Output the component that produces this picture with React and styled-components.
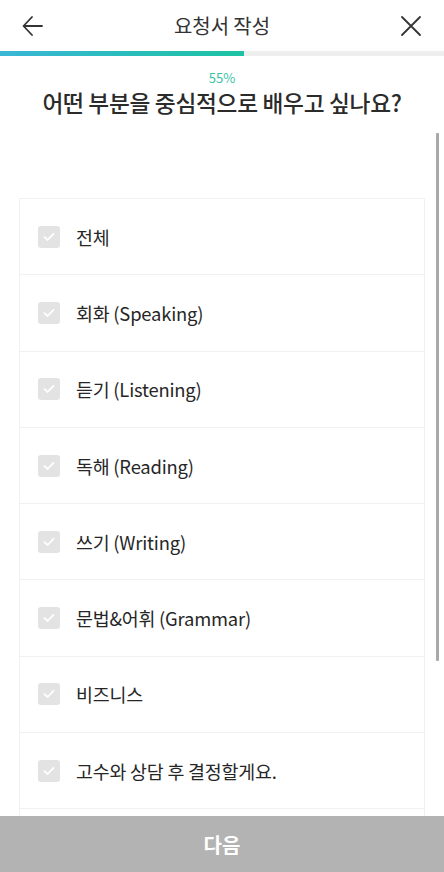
import React from "react";
import styled, { createGlobalStyle } from "styled-components";

const GlobalStyle = createGlobalStyle`
  html, body {
    margin: 0;
    padding: 0;
    background: #fff;
  }
  * {
    box-sizing: border-box;
  }
`;

const OPTIONS = [
  "전체",
  "회화 (Speaking)",
  "듣기 (Listening)",
  "독해 (Reading)",
  "쓰기 (Writing)",
  "문법&어휘 (Grammar)",
  "비즈니스",
  "고수와 상담 후 결정할게요.",
];

const App = () => {
  const progress = 55;

  return (
    <StPage>
      <GlobalStyle />
      <StHeader>
        <StIconButton aria-label="뒤로">
          <svg width="22" height="22" viewBox="0 0 22 22" fill="none">
            <path
              d="M20 11H2M10 2L1.5 11L10 20"
              stroke="#333"
              strokeWidth="1.8"
              strokeLinecap="round"
              strokeLinejoin="round"
            />
          </svg>
        </StIconButton>
        <StTitle>요청서 작성</StTitle>
        <StIconButton aria-label="닫기">
          <svg width="22" height="22" viewBox="0 0 22 22" fill="none">
            <path
              d="M2 2L20 20M20 2L2 20"
              stroke="#333"
              strokeWidth="1.8"
              strokeLinecap="round"
            />
          </svg>
        </StIconButton>
      </StHeader>

      <StProgressTrack>
        <StProgressFill style={{ width: `${progress}%` }} />
      </StProgressTrack>

      <StPercent>{progress}%</StPercent>
      <StQuestion>어떤 부분을 중심적으로 배우고 싶나요?</StQuestion>

      <StBody>
        <StScroll>
          <StCard>
            {OPTIONS.map((label) => (
              <StRow key={label}>
                <StCheck>
                  <svg width="12" height="10" viewBox="0 0 12 10" fill="none">
                    <path
                      d="M1.5 5.2L4.6 8L10.5 1.8"
                      stroke="#fff"
                      strokeWidth="1.8"
                      strokeLinecap="round"
                      strokeLinejoin="round"
                    />
                  </svg>
                </StCheck>
                <StLabel>{label}</StLabel>
              </StRow>
            ))}
            <StRow />
          </StCard>
        </StScroll>
        <StThumb />
      </StBody>

      <StNextButton>다음</StNextButton>
    </StPage>
  );
};

export default App;

const StPage = styled.div`
  width: 444px;
  height: 872px;
  display: flex;
  flex-direction: column;
  overflow: hidden;
  font-family: "Noto Sans CJK KR", "Noto Sans", sans-serif;
  color: #333;
`;

const StHeader = styled.header`
  height: 51px;
  display: flex;
  align-items: center;
  justify-content: space-between;
  padding: 0 22px 0 22px;
  flex-shrink: 0;
`;

const StIconButton = styled.button`
  width: 22px;
  height: 22px;
  padding: 0;
  border: 0;
  background: none;
  display: flex;
  align-items: center;
  justify-content: center;
`;

const StTitle = styled.h1`
  margin: 0;
  font-size: 20px;
  font-weight: 400;
  color: #333;
  letter-spacing: -0.1px;
`;

const StProgressTrack = styled.div`
  height: 5px;
  background: #eeeeee;
  flex-shrink: 0;
`;

const StProgressFill = styled.div`
  height: 100%;
  background: linear-gradient(90deg, #3ab6d6 0%, #1cc3a3 100%);
`;

const StPercent = styled.div`
  margin-top: 13px;
  text-align: center;
  font-size: 13px;
  line-height: 18px;
  color: #36c3a8;
`;

const StQuestion = styled.h2`
  margin: 0;
  text-align: center;
  font-size: 22.7px;
  line-height: 32px;
  font-weight: 500;
  color: #2b2b2b;
  letter-spacing: -0.3px;
`;

const StBody = styled.div`
  position: relative;
  flex: 1;
  min-height: 0;
`;

const StScroll = styled.div`
  height: 100%;
  overflow: hidden;
  padding: 79px 19px 0 19px;
`;

const StCard = styled.ul`
  margin: 0;
  padding: 0;
  list-style: none;
  border: 1px solid #f1f1f1;
  background: #fff;
`;

const StRow = styled.li`
  height: 76.3px;
  display: flex;
  align-items: center;
  gap: 16px;
  padding: 0 18px;
  border-bottom: 1px solid #f1f1f1;
`;

const StCheck = styled.span`
  width: 22px;
  height: 22px;
  border-radius: 3px;
  background: #e3e3e3;
  display: flex;
  align-items: center;
  justify-content: center;
  flex-shrink: 0;
`;

const StLabel = styled.span`
  font-size: 18.4px;
  color: #262626;
  letter-spacing: -0.2px;
`;

const StThumb = styled.div`
  position: absolute;
  top: 14px;
  right: 5px;
  width: 3px;
  height: 528px;
  background: #a9a9a9;
  border-radius: 1px;
`;

const StNextButton = styled.button`
  height: 56px;
  flex-shrink: 0;
  border: 0;
  background: #b3b3b3;
  color: #fff;
  font-family: "Noto Sans CJK KR", "Noto Sans", sans-serif;
  font-size: 20px;
  font-weight: 700;
`;
